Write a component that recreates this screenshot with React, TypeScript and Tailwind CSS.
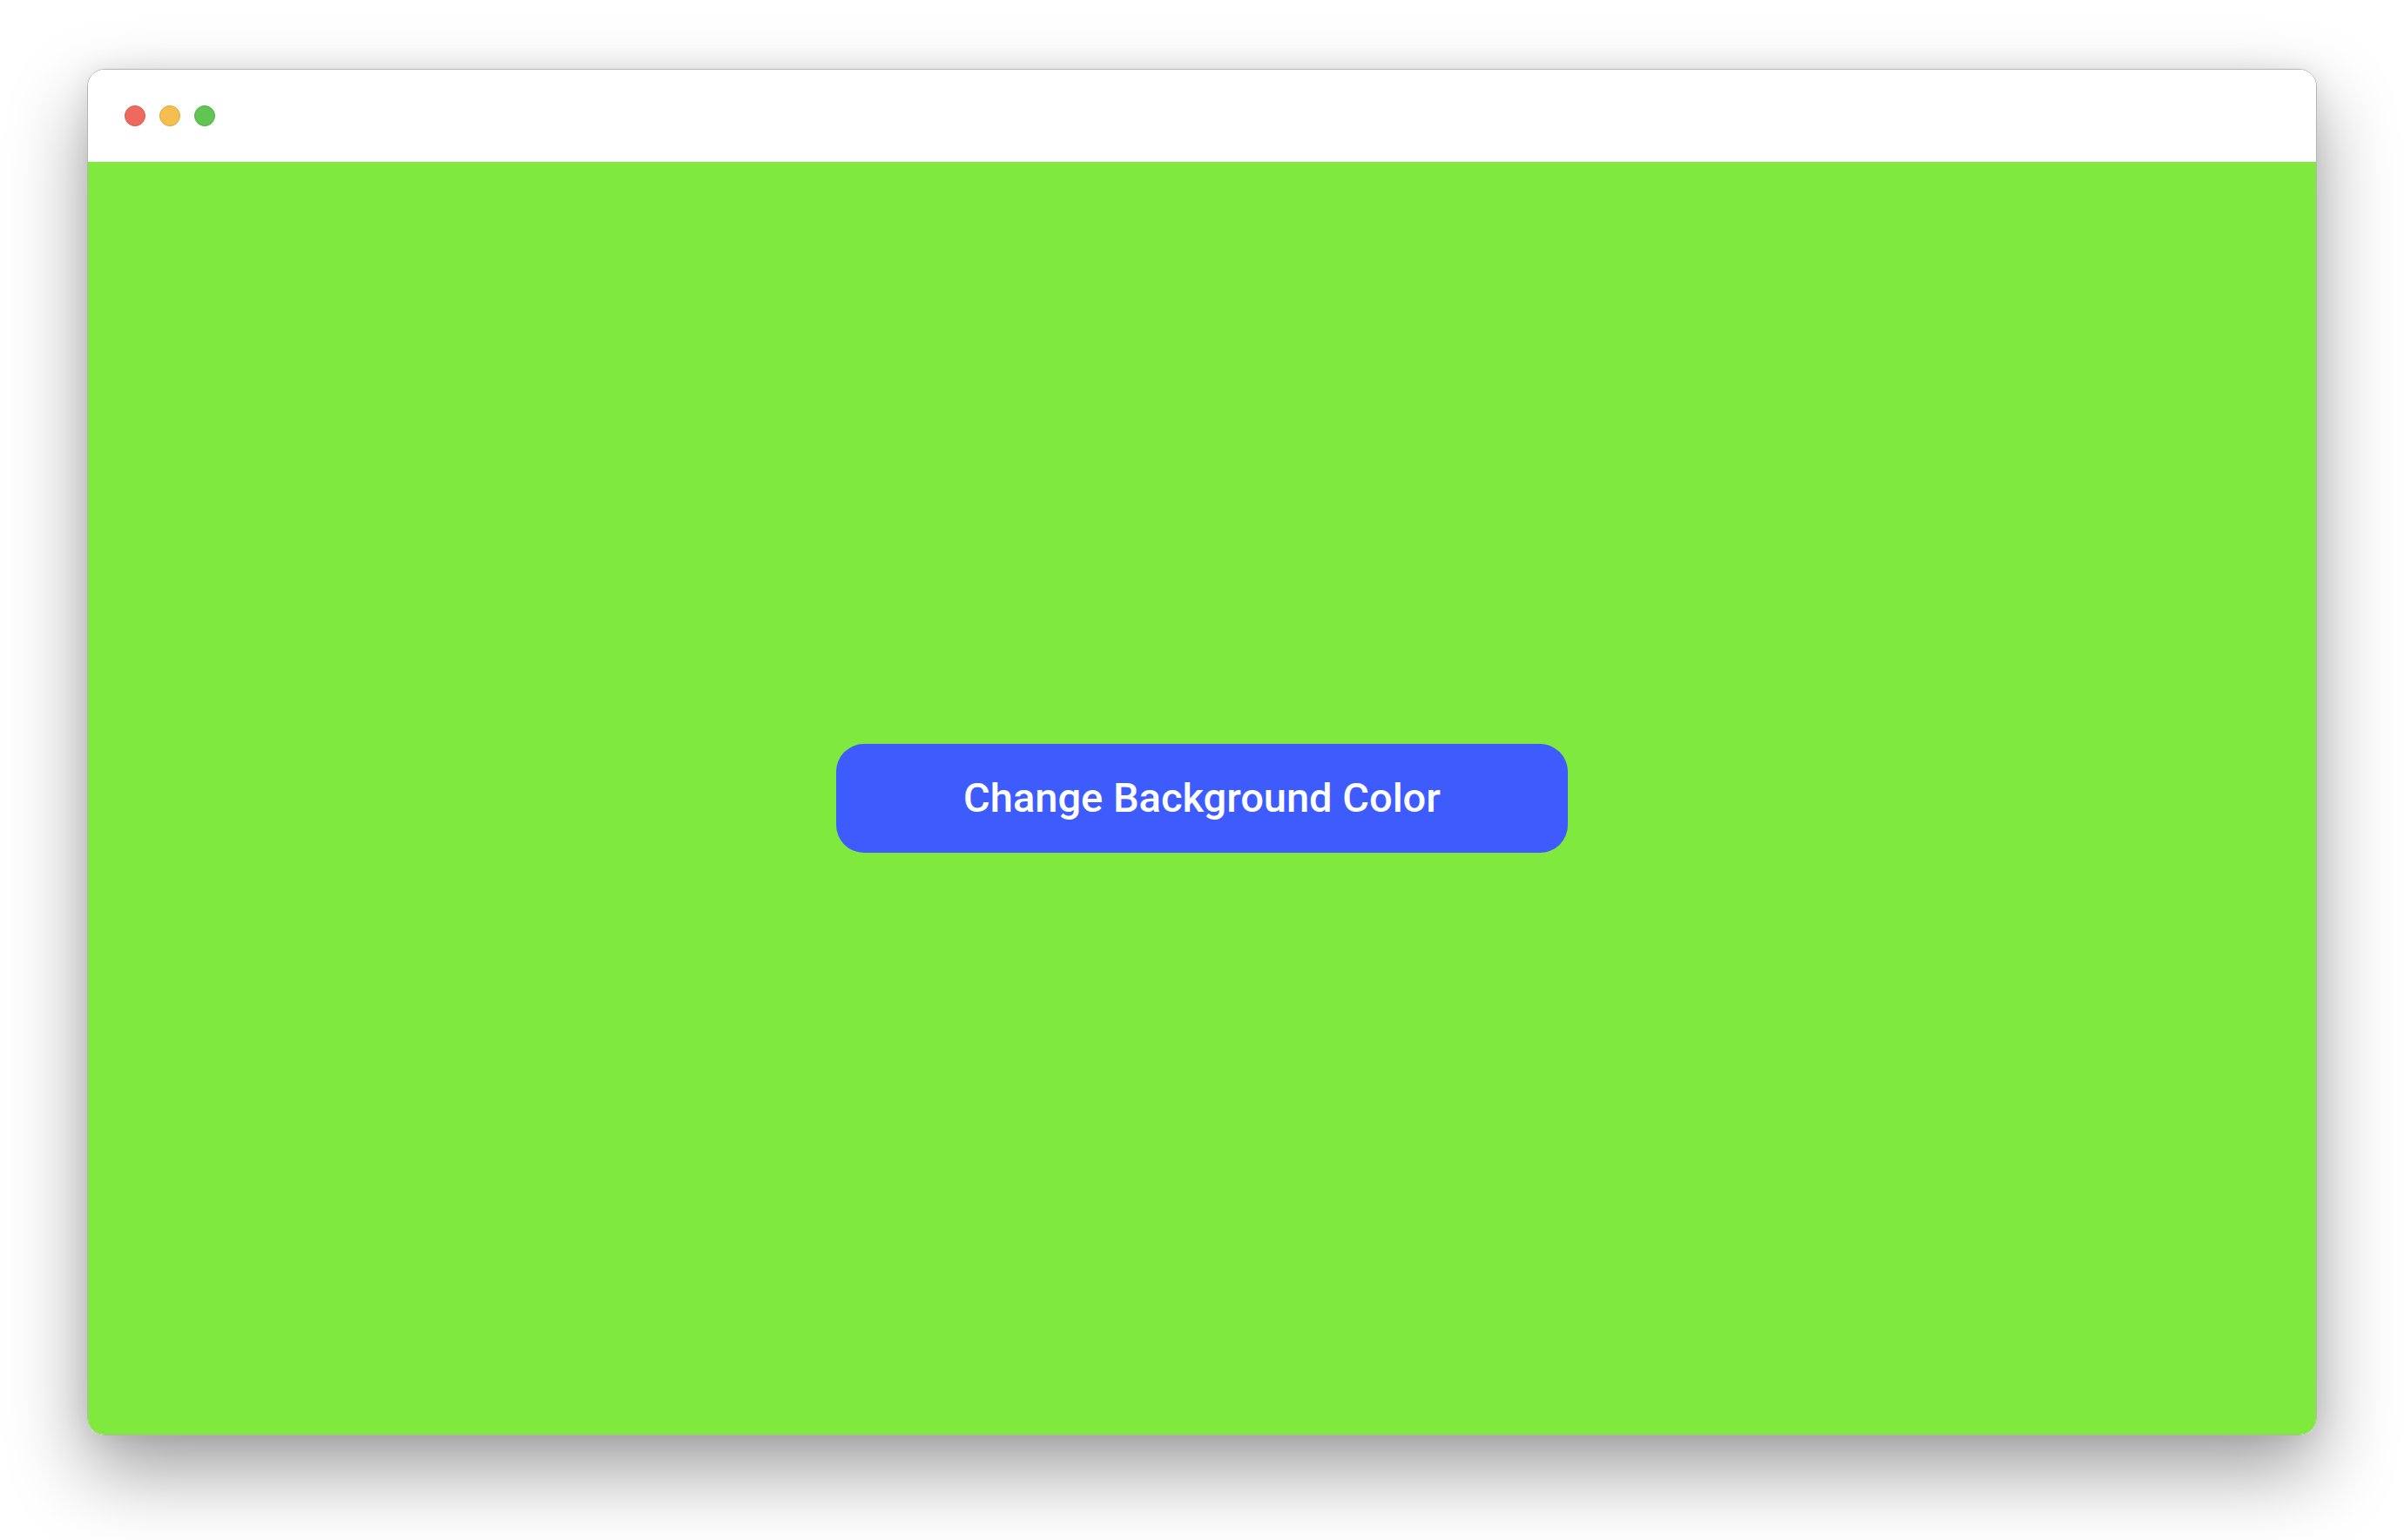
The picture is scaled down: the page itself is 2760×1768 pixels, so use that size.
import React from "react";

export default function App() {
  return (
    <div className="w-[2760px] h-[1768px] bg-white pt-[79px] px-[100px] overflow-hidden" style={{ fontFamily: "Roboto, 'Noto Sans', sans-serif" }}>
      <div className="w-[2560px] h-[1569px] rounded-[20px] border border-[#b4b4b4] overflow-hidden flex flex-col shadow-[0_40px_90px_rgba(0,0,0,0.38),0_0_30px_rgba(0,0,0,0.08)]">
        <div className="h-[106px] bg-white border-b border-[#e6e6e6] flex items-center pl-[42px] gap-[16px] shrink-0">
          <span className="w-[24px] h-[24px] rounded-full bg-[#ee6a5f] border border-[#d9574c]" />
          <span className="w-[24px] h-[24px] rounded-full bg-[#f5bf4f] border border-[#dea63c]" />
          <span className="w-[24px] h-[24px] rounded-full bg-[#61c554] border border-[#4fae43]" />
        </div>
        <div className="flex-1 bg-[#80e93d] flex items-center justify-center">
          <button className="w-[840px] h-[125px] rounded-[32px] bg-[#3e5cfe] text-white text-[47px] font-medium tracking-[0px]">
            Change Background Color
          </button>
        </div>
      </div>
    </div>
  );
}
